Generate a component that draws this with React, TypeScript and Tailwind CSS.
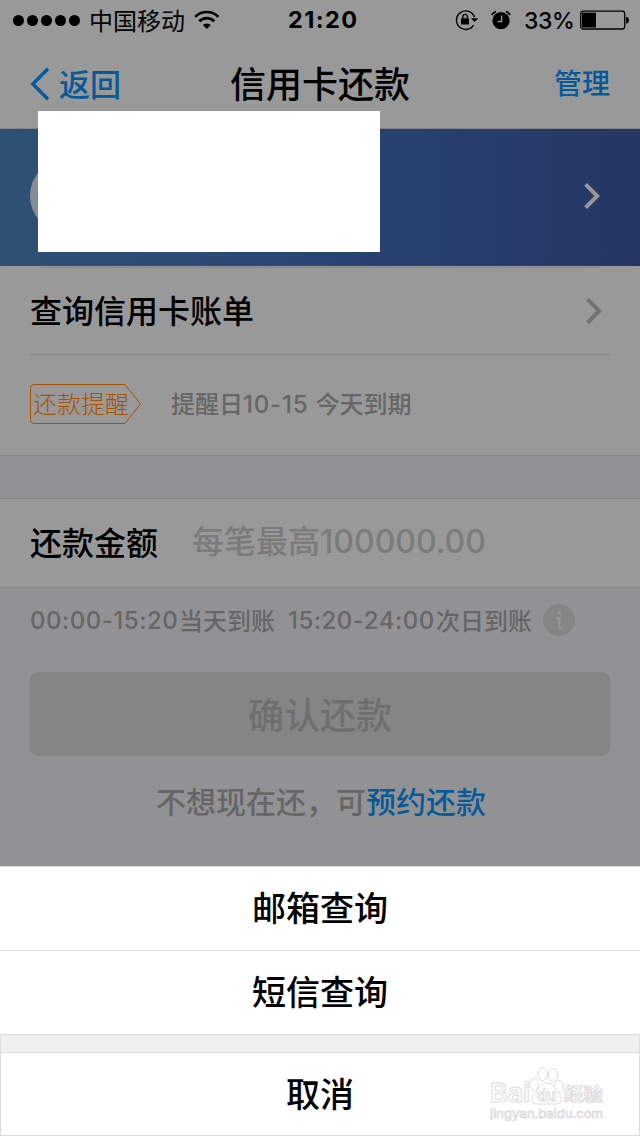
import type { ReactNode } from "react";
import { clsx } from "clsx";

interface ChevronProps {
  className?: string;
}

const Chevron = ({ className }: ChevronProps) => (
  <svg
    viewBox="0 0 16 28"
    className={clsx("h-7 w-4 shrink-0", className)}
    fill="none"
    stroke="currentColor"
    strokeWidth="4"
  >
    <path d="M1.6 2.400 13.200 14 1.600 25.600" />
  </svg>
);

interface NumProps {
  className?: string;
  children: ReactNode;
}

// Digits use Inter so they sit next to the CJK text
const Num = ({ className, children }: NumProps) => (
  <span className={clsx("font-['Inter','Noto_Sans_CJK_SC',sans-serif] whitespace-pre", className)}>
    {children}
  </span>
);

const StatusBar = () => (
  <div className="relative flex h-10 items-center justify-between pl-[13px] pr-2.5 text-black">
    <div className="flex items-center">
      <div className="flex gap-[3px]">
        {[0, 1, 2, 3, 4].map((dot) => (
          <span key={dot} className="h-[11px] w-[11px] rounded-full bg-black" />
        ))}
      </div>
      <span className="ml-[9px] text-2xl leading-[38px]">中国移动</span>
      <svg viewBox="0 0 26 20" className="ml-[9px] h-5 w-[26px]" fill="none" stroke="black" strokeWidth="2.7">
        <path d="M1.2 6.9a16.2 16.2 0 0 1 23.2 0" />
        <path d="M5.3 11.2a10.6 10.6 0 0 1 15 0" />
        <path d="M12.8 19 8.8 15a5.8 5.8 0 0 1 8 0z" fill="black" stroke="none" />
      </svg>
    </div>

    <Num className="absolute left-[288px] text-[23.5px] leading-[42px] font-bold tracking-[1.4px]">
      21:20
    </Num>

    <div className="flex items-center">
      <svg viewBox="0 0 24 22" className="h-[22px] w-6" fill="none">
        <path d="M18.6 16.2A9.3 9.3 0 1 1 19.5 8" stroke="black" strokeWidth="1.4" />
        <path d="M16 9.2h7.2L19.6 13z" fill="black" />
        <rect x="6" y="9.3" width="8" height="6.3" rx=".6" fill="black" />
        <path d="M7.7 9.5V7.3a2.4 2.4 0 0 1 4.7 0v2.2" stroke="black" strokeWidth="1.4" />
      </svg>
      <svg viewBox="0 0 20 20" className="ml-3 h-5 w-5" fill="none">
        <circle cx="10" cy="10.7" r="8.6" fill="black" />
        <path d="M.9 5.2A6 6 0 0 1 5 1.6M19.1 5.2A6 6 0 0 0 15 1.6" stroke="black" strokeWidth="1.8" />
        <path d="M10.6 5.5v6H6.5" stroke="#999" strokeWidth="1.4" />
      </svg>
      <Num className="ml-[13px] w-[51px] pt-0.5 text-[23px] leading-[38px] font-medium tracking-[-.4px]">33%</Num>
      <svg viewBox="0 0 50 20" className="ml-[5px] h-5 w-[50px]">
        <rect x=".7" y="1.2" width="44" height="17.8" rx="2.5" fill="none" stroke="black" strokeWidth="1.3" />
        <rect x="2" y="2.7" width="14" height="14.8" fill="black" />
        <path d="M46 6.7c4 .5 4 6.6 0 7z" fill="black" />
      </svg>
    </div>
  </div>
);

const NavBar = () => (
  <div className="grid h-[89px] grid-cols-[200px_1fr_200px] items-center border-b border-[#858587]">
    <div className="flex items-center pl-[30px] text-[#075a99]">
      <svg viewBox="0 0 20 34" className="h-[34px] w-5" fill="none" stroke="currentColor" strokeWidth="3.4">
        <path d="M18 1.8 2.8 17 18 32.2" />
      </svg>
      <span className="ml-[9px] pb-[3px] text-[31px] leading-[84px] font-medium">返回</span>
    </div>
    <h1 className="pb-1 text-center text-4xl leading-[84px] font-medium text-black">信用卡还款</h1>
    <span className="pr-[30px] pb-[5px] text-right text-[28px] leading-[82px] font-medium text-[#075a99]">管理</span>
  </div>
);

const CardBanner = () => (
  <div className="relative flex h-[137px] items-center justify-between bg-linear-to-r from-[#2f5175] via-[#294573] to-[#253664] pr-10 pb-[3px] pl-[30px]">
    <div className="h-[74px] w-[74px] rounded-full border-7 border-[#858c96] bg-[#787f89]" />
    <Chevron className="text-[#999]" />
    {/* Card details are masked */}
    <div className="absolute left-[38px] -top-[18px] h-[141px] w-[342px] bg-white" />
  </div>
);

const ReminderTag = () => (
  <div className="relative h-10 w-28">
    <svg viewBox="0 0 112 40" className="absolute inset-0 h-10 w-28" fill="none" stroke="#a65200">
      <path d="M3.5.5H95L110.5 20 95 39.5H3.5q-3 0-3-3v-33q0-3 3-3z" />
    </svg>
    <span className="block pl-[3px] text-2xl leading-[38px] font-light text-[#a65200]">还款提醒</span>
  </div>
);

const BillSection = () => (
  <section className="border-b border-[#858587] bg-[#999]">
    <div className="px-10 pt-px">
      <div className="h-px bg-[#858587]" />
    </div>
    <div className="mx-[30px] flex h-[87px] items-center justify-between border-b border-[#858587] pr-2">
      <span className="pb-1 text-[32px] leading-[82px] font-medium text-black">查询信用卡账单</span>
      <Chevron className="text-[#727274]" />
    </div>
    <div className="flex h-[100px] items-center pb-0.5 pl-[30px]">
      <ReminderTag />
      <span className="ml-[29px] text-2xl leading-[42px] font-medium whitespace-pre text-[#666]">
        提醒日<Num className="tracking-[.8px]">10-15 </Num>今天到期
      </span>
    </div>
  </section>
);

const AmountSection = () => (
  <section className="mt-[42px] flex h-[90px] items-center border-y border-[#858587] bg-[#999] pl-[30px] text-[32px] font-medium">
    <span className="pb-1 leading-[84px] text-black">还款金额</span>
    <span className="ml-[34px] pb-[6px] leading-[82px] text-[#7b7b7b]">
      每笔最高<Num>100000.00</Num>
    </span>
  </section>
);

const ArrivalHint = () => (
  <div className="flex h-16 items-center pl-[30px] text-2xl leading-10 font-medium text-[#666]">
    <Num className="w-[149px] pt-0.5 tracking-[.5px]">00:00-15:20</Num>
    <span>当天到账</span>
    <Num className="ml-[13px] w-[148px] pt-0.5 tracking-[.5px]">15:20-24:00</Num>
    <span>次日到账</span>
    <svg viewBox="0 0 32 32" className="ml-[11px] h-8 w-8" fill="none">
      <circle cx="16" cy="16" r="16" fill="#858585" />
      <circle cx="16.3" cy="9" r="2" fill="#939393" />
      <path d="M13.200 14h3v10.200h3.200" stroke="#939393" strokeWidth="2.5" />
    </svg>
  </div>
);

const sheetItem =
  "block w-full border-t border-[#dcdcdc] bg-white pb-1 text-center text-[34px] font-medium text-black";

const Watermark = () => (
  <div className="absolute right-9 bottom-3 h-[60px] w-[114px]">
    <svg viewBox="0 0 114 60" className="h-full w-full" fill="white" stroke="#dcdcdc" strokeWidth="1">
      <text x="0" y="38" fontFamily="Inter" fontSize="26" fontWeight="600" textLength="40" lengthAdjust="spacingAndGlyphs">Bai</text>
      <ellipse cx="44" cy="20.500" rx="4.500" ry="6" />
      <ellipse cx="52.500" cy="10" rx="4.800" ry="6.500" />
      <ellipse cx="63" cy="11" rx="4.800" ry="6.500" />
      <ellipse cx="69" cy="22.500" rx="4.500" ry="6" />
      <path d="M57 19C62 19 64 23 67 27 71 31 72 34 71 37 69 41 65 40 57 40 49 40 44 41 42 37 41 33 44 30 47 27 50 22 52 19 57 19Z" />
      <text x="47" y="37" fontFamily="Inter" fontSize="16" fontWeight="700" textLength="19" lengthAdjust="spacingAndGlyphs">du</text>
      <text x="74" y="36.500" fontFamily="Noto Sans CJK SC" fontSize="18" fontWeight="700" textLength="39" lengthAdjust="spacingAndGlyphs">经验</text>
      <text x="0" y="54" fontFamily="Inter" fontSize="12" fontWeight="400" strokeWidth=".8" textLength="113" lengthAdjust="spacingAndGlyphs">jingyan.baidu.com</text>
    </svg>
  </div>
);

const ActionSheet = () => (
  <div className="relative bg-[#f0f0f0]">
    <button className={clsx(sheetItem, "h-[84px]")}>邮箱查询</button>
    <button className={clsx(sheetItem, "h-[84px]")}>短信查询</button>
    <div className="border border-[#dcdcdc] pt-[17px]">
      <button className={clsx(sheetItem, "h-[83px]")}>取消</button>
    </div>
    <Watermark />
  </div>
);

export default function App() {
  return (
    <div className="flex h-[1136px] w-[640px] flex-col overflow-hidden bg-[#929294] font-['Noto_Sans_CJK_SC',sans-serif]">
      <header className="bg-[#999]">
        <StatusBar />
        <NavBar />
      </header>
      <CardBanner />
      <BillSection />
      <AmountSection />
      <ArrivalHint />
      <button className="mx-[30px] mt-5 h-[84px] rounded-lg bg-[#858585] pb-0.5 text-4xl font-medium text-[#6f6f6f]">
        确认还款
      </button>
      <p className="mt-[22px] flex-1 pl-[156px] text-[30px] leading-[44px] font-medium text-[#666]">
        不想现在还，可<span className="text-[#075a99]">预约还款</span>
      </p>
      <ActionSheet />
    </div>
  );
}
